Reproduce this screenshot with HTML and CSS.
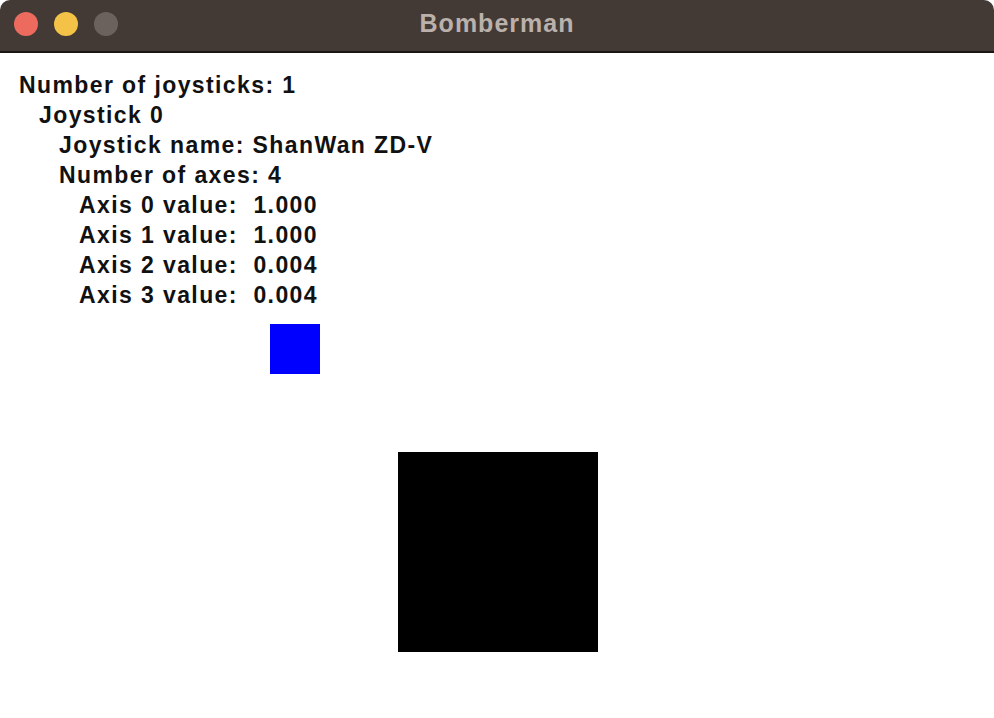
FILE: index.html
```html
<!DOCTYPE html>
<html>
<head>
<meta charset="utf-8">
<link rel="stylesheet" href="styles.css">
</head>
<body>
<div class="window">
  <div class="titlebar">
    <div class="lights">
      <span class="light red"></span>
      <span class="light yellow"></span>
      <span class="light gray"></span>
    </div>
    <div class="title">Bomberman</div>
  </div>
  <div class="canvas">
    <div class="info">
      <div class="line l0">Number of joysticks: 1</div>
      <div class="line l1">Joystick 0</div>
      <div class="line l2">Joystick name: ShanWan ZD-V</div>
      <div class="line l2">Number of axes: 4</div>
      <div class="line l3">Axis 0 value:  1.000</div>
      <div class="line l3">Axis 1 value:  1.000</div>
      <div class="line l3">Axis 2 value:  0.004</div>
      <div class="line l3">Axis 3 value:  0.004</div>
    </div>
    <div class="blue-box"></div>
    <div class="black-box"></div>
  </div>
</div>
</body>
</html>
```
FILE: styles.css
```css
html, body {
  margin: 0;
  padding: 0;
  background: #ffffff;
}
.window {
  width: 994px;
  height: 718px;
  display: flex;
  flex-direction: column;
  overflow: hidden;
}
.titlebar {
  height: 51px;
  background: #443a35;
  border-bottom: 2px solid #1a1614;
  border-radius: 10px 10px 0 0;
  position: relative;
  display: flex;
  align-items: center;
  justify-content: center;
  flex: none;
}
.lights {
  position: absolute;
  left: 14px;
  top: 12px;
  display: flex;
  gap: 16px;
}
.light {
  width: 24px;
  height: 24px;
  border-radius: 50%;
  display: block;
}
.red { background: #ec6b5e; }
.yellow { background: #f4c246; }
.gray { background: #6c625d; }
.title {
  font-family: "Liberation Sans", Arial, sans-serif;
  font-weight: 700;
  font-size: 25px;
  letter-spacing: 1px;
  color: #bab1ac;
  margin-top: -5px;
}
.canvas {
  position: relative;
  flex: 1;
  background: #ffffff;
}
.info {
  padding-top: 17px;
  font-family: "Liberation Sans", Arial, sans-serif;
  font-weight: 700;
  font-size: 23px;
  letter-spacing: 1.4px;
  color: #111111;
}
.line {
  height: 30px;
  line-height: 30px;
  white-space: pre;
}
.l0 { padding-left: 19px; }
.l1 { padding-left: 39px; }
.l2 { padding-left: 59px; }
.l3 { padding-left: 79px; }
.blue-box {
  position: absolute;
  left: 270px;
  top: 271px;
  width: 50px;
  height: 50px;
  background: #0000ff;
}
.black-box {
  position: absolute;
  left: 398px;
  top: 399px;
  width: 200px;
  height: 200px;
  background: #000000;
}
```
